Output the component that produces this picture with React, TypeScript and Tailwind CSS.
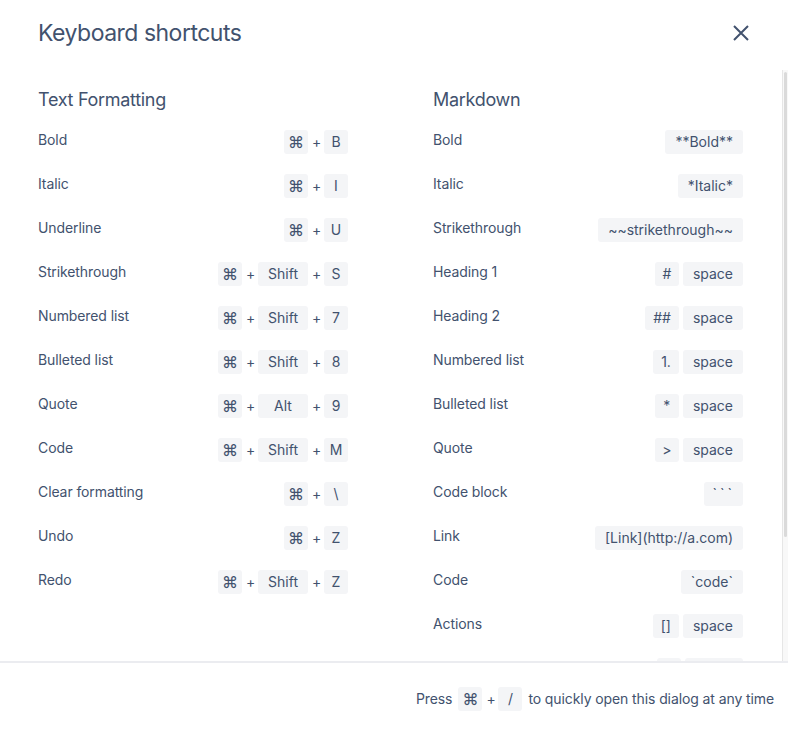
import React from 'react';

type Row = { label: string; keys: string[]; joined?: boolean };

const formatting: Row[] = [
  { label: 'Bold', keys: ['⌘', 'B'] },
  { label: 'Italic', keys: ['⌘', 'I'] },
  { label: 'Underline', keys: ['⌘', 'U'] },
  { label: 'Strikethrough', keys: ['⌘', 'Shift', 'S'] },
  { label: 'Numbered list', keys: ['⌘', 'Shift', '7'] },
  { label: 'Bulleted list', keys: ['⌘', 'Shift', '8'] },
  { label: 'Quote', keys: ['⌘', 'Alt', '9'] },
  { label: 'Code', keys: ['⌘', 'Shift', 'M'] },
  { label: 'Clear formatting', keys: ['⌘', '\\'] },
  { label: 'Undo', keys: ['⌘', 'Z'] },
  { label: 'Redo', keys: ['⌘', 'Shift', 'Z'] },
];

const markdown: Row[] = [
  { label: 'Bold', keys: ['**Bold**'], joined: true },
  { label: 'Italic', keys: ['*Italic*'], joined: true },
  { label: 'Strikethrough', keys: ['~~strikethrough~~'], joined: true },
  { label: 'Heading 1', keys: ['#', 'space'], joined: true },
  { label: 'Heading 2', keys: ['##', 'space'], joined: true },
  { label: 'Numbered list', keys: ['1.', 'space'], joined: true },
  { label: 'Bulleted list', keys: ['*', 'space'], joined: true },
  { label: 'Quote', keys: ['>', 'space'], joined: true },
  { label: 'Code block', keys: ['```'], joined: true },
  { label: 'Link', keys: ['[Link](http://a.com)'], joined: true },
  { label: 'Code', keys: ['`code`'], joined: true },
  { label: 'Actions', keys: ['[]', 'space'], joined: true },
];

function Key({ k }: { k: string }) {
  const wide = k === 'Shift' || k === 'Alt';
  const single = k.length === 1;
  return (
    <span
      className={`inline-flex h-6 items-center justify-center rounded-[3px] bg-[#F4F5F7] leading-none ${
        k === '⌘' ? 'text-base' : 'text-sm'
      } ${k === '```' ? 'tracking-[3px]' : ''} ${
        wide ? 'min-w-[50px] px-2' : single ? 'w-6' : k.length <= 3 ? 'min-w-6 px-2' : 'px-[10px]'
      }`}
    >
      {k}
    </span>
  );
}

function Keys({ row }: { row: Row }) {
  return (
    <div className="flex items-center gap-1">
      {row.keys.map((k, i) => (
        <React.Fragment key={i}>
          {i > 0 && !row.joined && <span className="w-2 text-center text-sm">+</span>}
          <Key k={k} />
        </React.Fragment>
      ))}
    </div>
  );
}

function Section({ title, rows, more }: { title: string; rows: Row[]; more?: boolean }) {
  return (
    <div className="w-[310px] shrink-0">
      <h2 className="text-lg leading-6 tracking-[-0.3px]">{title}</h2>
      <div className="mt-2">
        {rows.map((r, i) => (
          <div key={i} className="flex h-11 items-center justify-between">
            <span className="-mt-1 text-sm tracking-[-0.1px]">{r.label}</span>
            <Keys row={r} />
          </div>
        ))}
        {more && (
          <div className="flex h-11 items-center justify-end gap-1">
            <span className="h-6 w-6 rounded-[3px] bg-[#F4F5F7]" />
            <span className="h-6 w-[58px] rounded-[3px] bg-[#F4F5F7]" />
          </div>
        )}
      </div>
    </div>
  );
}

export default function App() {
  return (
    <div
      className="flex h-[731px] w-[788px] flex-col overflow-hidden bg-white text-[#42526E]"
      style={{ fontFamily: 'Inter, "DejaVu Sans", sans-serif' }}
    >
      <div className="flex h-[70px] shrink-0 items-start justify-between pl-[38px] pr-[38px] pt-[19px]">
        <h1 className="text-[23px] leading-7 tracking-[-0.5px]">Keyboard shortcuts</h1>
        <button className="mt-[5px] text-[#42526E]">
          <svg width="18" height="18" viewBox="0 0 18 18" fill="none" stroke="currentColor" strokeWidth="2">
            <path d="M2 2l14 14M16 2L2 16" />
          </svg>
        </button>
      </div>

      <div className="flex min-h-0 flex-1">
        <div className="flex-1 overflow-hidden">
          <div className="flex gap-[85px] pl-[38px] pt-[18px]">
            <Section title="Text Formatting" rows={formatting} />
            <Section title="Markdown" rows={markdown} more />
          </div>
        </div>
        <div className="w-[6px] shrink-0 border-l border-[#E6E6E6] bg-[#F8F8F8] pt-[2px]">
          <div className="ml-[1px] h-[465px] w-[3px] rounded-full bg-[#DADADA]" />
        </div>
      </div>

      <div className="flex h-[70px] shrink-0 items-center justify-end gap-1 border-t-2 border-[#EBECF0] pr-[14px] pt-1 text-sm tracking-[-0.1px]">
        <span className="mr-0.5">Press</span>
        <Key k="⌘" />
        <span className="w-2 text-center">+</span>
        <Key k="/" />
        <span className="ml-0.5">to quickly open this dialog at any time</span>
      </div>
    </div>
  );
}
